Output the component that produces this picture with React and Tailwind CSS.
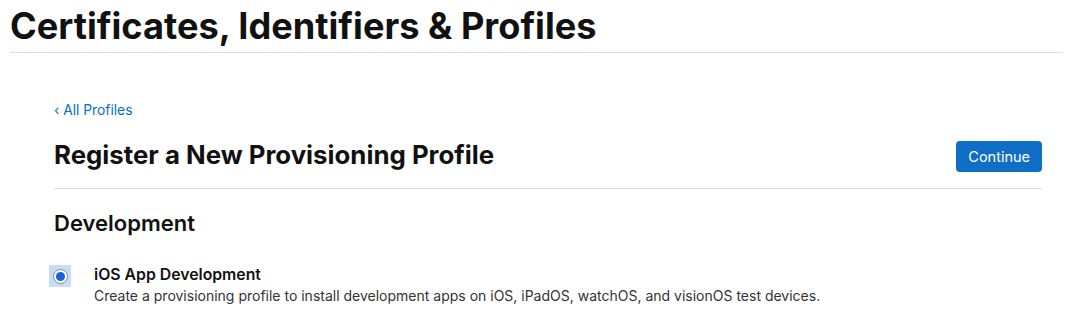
export default function App() {
  return (
    <div className="w-[1065px] h-[330px] bg-white overflow-hidden" style={{ fontFamily: 'Inter, "Noto Sans", sans-serif' }}>
      <div className="pl-[10px] pr-[2px]">
        <h1 className="text-[36.2px] font-bold leading-[52px] text-[#111] border-b border-[#dedede]">Certificates, Identifiers &amp; Profiles</h1>
      </div>
      <div className="pl-[54px] pr-[23px] pt-[49px]">
        <a className="text-[13.8px] text-[#0070c9] leading-[17px] block">‹ All Profiles</a>
        <div className="flex items-center justify-between mt-[18px] pb-[16px] border-b border-[#d6d6d6]">
          <h2 className="text-[25.8px] font-bold text-[#111] leading-[32px]">Register a New Provisioning Profile</h2>
          <button className="bg-[#0f6fc6] text-white text-[14.5px] rounded-[4px] px-[12px] h-[31px] mt-[4px]">Continue</button>
        </div>
        <h3 className="text-[22px] font-semibold text-[#111] mt-[20px] leading-[28px]">Development</h3>
        <div className="flex mt-[28px] -ml-[5px]">
          <div className="w-[22px] h-[22px] bg-[#c7dcf6] flex items-center justify-center">
            <div className="w-[15px] h-[15px] rounded-full bg-white border border-[#7a8da3] flex items-center justify-center">
              <div className="w-[9px] h-[9px] rounded-full bg-[#1565d8]"></div>
            </div>
          </div>
          <div className="ml-[23px]">
            <div className="text-[15.8px] font-semibold text-[#111] leading-[20px]">iOS App Development</div>
            <div className="text-[14px] text-[#333] leading-[18px] mt-[2px]">Create a provisioning profile to install development apps on iOS, iPadOS, watchOS, and visionOS test devices.</div>
          </div>
        </div>
      </div>
    </div>
  );
}
